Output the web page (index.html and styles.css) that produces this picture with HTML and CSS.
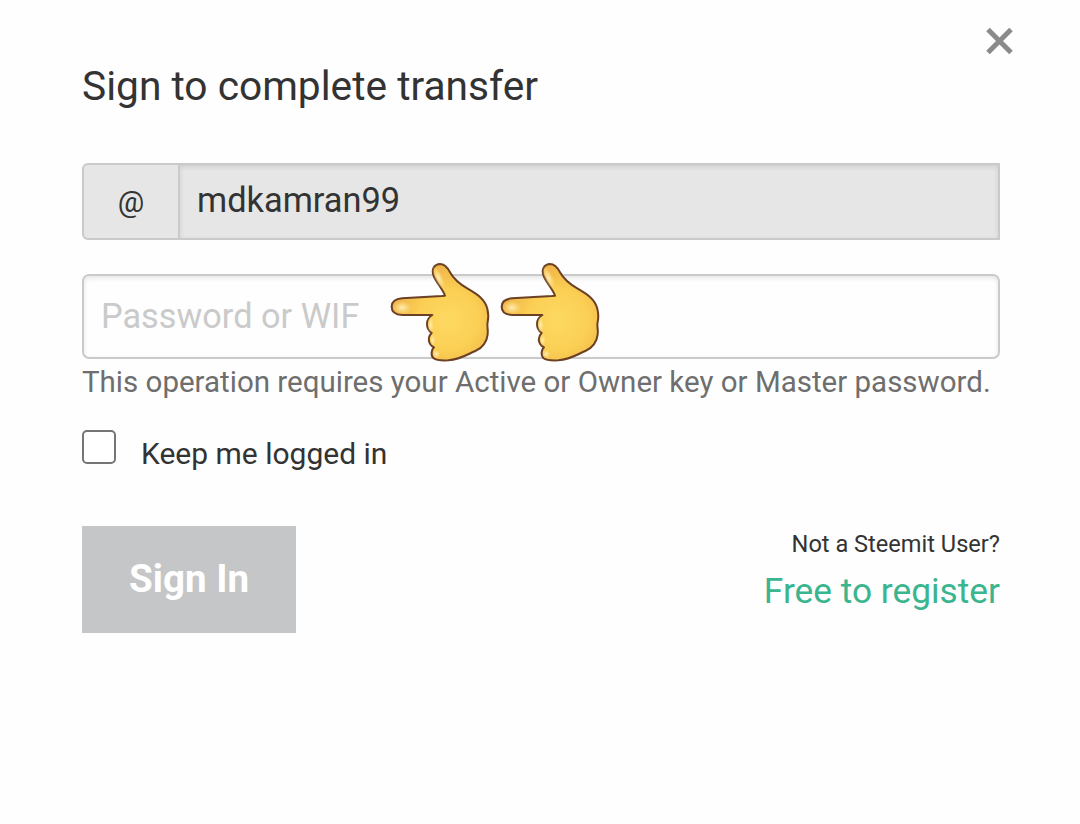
FILE: index.html
```
<!DOCTYPE html>
<html lang="en">
<head>
    <meta charset="UTF-8">
    <meta name="viewport" content="width=device-width, initial-scale=1.0">
    <title>Sign to complete transfer</title>
    <link rel="stylesheet" href="styles.css">
</head>
<body>
    <!-- hand shape shared by both pointers -->
    <svg class="defs" width="0" height="0" aria-hidden="true">
        <defs>
            <radialGradient id="skin" gradientUnits="userSpaceOnUse" cx="205" cy="195" r="180">
                <stop offset="0" stop-color="#fdd962"/>
                <stop offset="0.5" stop-color="#fbcf54"/>
                <stop offset="1" stop-color="#eeb045"/>
            </radialGradient>
            <radialGradient id="shine">
                <stop offset="0" stop-color="#fff0bd" stop-opacity="0.95"/>
                <stop offset="1" stop-color="#ffe690" stop-opacity="0"/>
            </radialGradient>
            <symbol id="hand" viewBox="0 0 360 345">
                <path d="M195 122 C191 108 169 82 161 63 C153 42 163 28 180 27 C195 27 203 38 211 53 C219 68 238 86 263 101 C294 119 315 133 322 161 C325 174 326 188 323 201 C320 213 325 222 323 238 C321 260 307 280 286 288 C262 298 241 313 205 316 C188 317 169 316 160 309 C151 300 155 283 162 277 C145 269 141 247 155 234 C137 220 135 193 157 180 L67 180 C46 179 35 169 35 155 C35 140 46 132 66 130 L185 123 Z" fill="url(#skin)" stroke="#6b4024" stroke-width="6" stroke-linejoin="round"/>
                <ellipse cx="66" cy="158" rx="29" ry="21" fill="url(#shine)"/>
                <ellipse cx="176" cy="68" rx="13" ry="38" fill="url(#shine)" transform="rotate(-24 176 68)"/>
                <ellipse cx="152" cy="210" rx="10" ry="24" fill="url(#shine)"/>
                <ellipse cx="158" cy="256" rx="9" ry="18" fill="url(#shine)"/>
                <ellipse cx="169" cy="297" rx="12" ry="14" fill="url(#shine)"/>
            </symbol>
        </defs>
    </svg>

    <div class="modal">
        <button class="close" type="button" aria-label="Close">
            <svg width="28" height="28" viewBox="0 0 28 28">
                <path d="M3 2.5 L26 25.5 M26 2.5 L3 25.5" stroke="#8a8a8a" stroke-width="5"/>
            </svg>
        </button>
        <h3 class="title">Sign to complete transfer</h3>
        <form>
            <div class="input-group">
                <span class="label">@</span>
                <input class="username" type="text" value="mdkamran99" disabled>
            </div>
            <div class="password-row">
                <input class="password" type="text" placeholder="Password or WIF">
                <div class="pointers">
                    <svg width="120" height="115"><use href="#hand"/></svg>
                    <svg width="120" height="115"><use href="#hand"/></svg>
                </div>
            </div>
            <div class="help">This operation requires your Active or Owner key or Master password.</div>
            <label class="keep">
                <input type="checkbox">
                <span>Keep me logged in</span>
            </label>
            <div class="actions">
                <button class="sign-in" type="button">Sign In</button>
                <div class="register">
                    <span class="question">Not a Steemit User?</span>
                    <a class="link">Free to register</a>
                </div>
            </div>
        </form>
    </div>
</body>
</html>
```
FILE: styles.css
```
* {
    box-sizing: border-box;
}
body {
    margin: 0;
    background-color: #fefefe;
    color: #333;
    font-family: Roboto, Arial, sans-serif;
}
input, button {
    font-family: inherit;
    margin: 0;
}
.defs {
    position: absolute;
}
.modal {
    position: relative;
    padding: 58px 80px 0 82px;
}
.close {
    position: absolute;
    top: 27px;
    right: 67px;
    padding: 0;
    border: 0;
    background: none;
}
.close svg {
    display: block;
}
.title {
    margin: 0;
    font-size: 40.7px;
    font-weight: 400;
    line-height: 56px;
}
.input-group {
    display: flex;
    height: 77px;
    margin-top: 49px;
}
.label {
    width: 96px;
    border: 2px solid #cacaca;
    border-right: 0;
    border-radius: 6px 0 0 6px;
    background-color: #e6e6e6;
    font-size: 29.5px;
    line-height: 75px;
    text-align: center;
}
.username {
    flex: 1;
    padding: 0 17px 3px;
    border: 2px solid #cacaca;
    border-radius: 0;
    background-color: #e6e6e6;
    box-shadow: inset 0 2px 5px rgba(10, 10, 10, 0.1);
    color: #333;
    font-size: 34.4px;
}
.password-row {
    position: relative;
    display: flex;
    height: 85px;
    margin-top: 34px;
}
.password {
    flex: 1;
    padding: 0 17px 1px;
    border: 2px solid #cacaca;
    border-radius: 7px;
    background-color: #fefefe;
    box-shadow: inset 0 2px 5px rgba(10, 10, 10, 0.1);
    font-size: 34.3px;
}
.password::placeholder {
    color: #cacaca;
}
/* hands sit over the password field */
.pointers {
    position: absolute;
    top: -19px;
    left: 298px;
    display: flex;
}
.pointers svg + svg {
    margin-left: -10px;
}
.help {
    color: #6e6e6e;
    font-size: 29.5px;
    line-height: 46px;
    white-space: nowrap;
}
.keep {
    display: flex;
    align-items: flex-start;
    gap: 25px;
    margin-top: 25px;
    font-size: 30px;
    line-height: 48px;
}
.keep input {
    width: 34px;
    height: 34px;
    border: 2px solid #757575;
    border-radius: 5px;
    background-color: #fff;
    appearance: none;
}
.actions {
    display: flex;
    justify-content: space-between;
    align-items: flex-start;
    margin-top: 48px;
}
.sign-in {
    width: 214px;
    height: 107px;
    padding: 0 0 2px;
    border: 0;
    background-color: #c5c6c7;
    color: #fff;
    font-size: 38.6px;
    font-weight: 700;
}
.register {
    display: flex;
    flex-direction: column;
    align-items: flex-end;
}
.question {
    font-size: 23.6px;
    line-height: 37px;
}
.link {
    color: #3ab58e;
    font-size: 35.3px;
    line-height: 56px;
}
```
